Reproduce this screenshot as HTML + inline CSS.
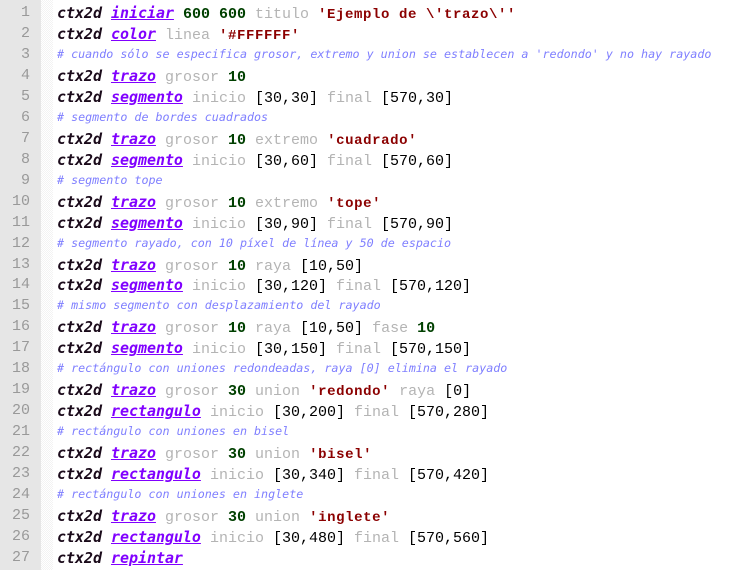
<!DOCTYPE html>
<html><head><meta charset="utf-8"><style>
body{margin:0;width:750px;height:570px;background:#fff;overflow:hidden;position:relative}
.g{position:absolute;left:0;top:0;width:41px;height:570px;background:#e6e6e6}
.d{position:absolute;left:41px;top:0;width:12px;height:570px;background-image:repeating-conic-gradient(#f3f3f3 0 25%,#fff 0 50%);background-size:2px 2px}
.ln{position:absolute;left:0;width:30px;text-align:right;font:15px "Liberation Mono",monospace;color:#999}
.l{position:absolute;left:57px;white-space:pre;font:15px "Liberation Mono",monospace;color:#000}
.c{font-weight:bold;font-style:italic;color:#1a0a1a;font-family:"DejaVu Sans Mono","Liberation Mono",monospace;font-size:14.95px}
.k{font-weight:bold;font-style:italic;color:#8000ff;text-decoration:underline;font-family:"DejaVu Sans Mono","Liberation Mono",monospace;font-size:14.95px}
.p{color:#b4b4b4}
.n{font-weight:bold;color:#004000}
.s{font-weight:bold;color:#8b0000;font-size:14px;letter-spacing:0.6px}
.m{font-style:italic;color:#7f7fff;font-size:11.7px;font-family:"DejaVu Sans Mono","Liberation Mono",monospace}
</style></head><body>
<div class="g"></div><div class="d"></div>
<div id="w"></div>
<script>
var L=[
'<span class="c">ctx2d</span> <span class="k">iniciar</span> <span class="n">600 600</span> <span class="p">titulo</span> <span class="s">\'Ejemplo de \\\'trazo\\\'\'</span>',
'<span class="c">ctx2d</span> <span class="k">color</span> <span class="p">linea</span> <span class="s">\'#FFFFFF\'</span>',
'<span class="m"># cuando sólo se especifica grosor, extremo y union se establecen a \'redondo\' y no hay rayado</span>',
'<span class="c">ctx2d</span> <span class="k">trazo</span> <span class="p">grosor</span> <span class="n">10</span>',
'<span class="c">ctx2d</span> <span class="k">segmento</span> <span class="p">inicio</span> [30,30] <span class="p">final</span> [570,30]',
'<span class="m"># segmento de bordes cuadrados</span>',
'<span class="c">ctx2d</span> <span class="k">trazo</span> <span class="p">grosor</span> <span class="n">10</span> <span class="p">extremo</span> <span class="s">\'cuadrado\'</span>',
'<span class="c">ctx2d</span> <span class="k">segmento</span> <span class="p">inicio</span> [30,60] <span class="p">final</span> [570,60]',
'<span class="m"># segmento tope</span>',
'<span class="c">ctx2d</span> <span class="k">trazo</span> <span class="p">grosor</span> <span class="n">10</span> <span class="p">extremo</span> <span class="s">\'tope\'</span>',
'<span class="c">ctx2d</span> <span class="k">segmento</span> <span class="p">inicio</span> [30,90] <span class="p">final</span> [570,90]',
'<span class="m"># segmento rayado, con 10 píxel de línea y 50 de espacio</span>',
'<span class="c">ctx2d</span> <span class="k">trazo</span> <span class="p">grosor</span> <span class="n">10</span> <span class="p">raya</span> [10,50]',
'<span class="c">ctx2d</span> <span class="k">segmento</span> <span class="p">inicio</span> [30,120] <span class="p">final</span> [570,120]',
'<span class="m"># mismo segmento con desplazamiento del rayado</span>',
'<span class="c">ctx2d</span> <span class="k">trazo</span> <span class="p">grosor</span> <span class="n">10</span> <span class="p">raya</span> [10,50] <span class="p">fase</span> <span class="n">10</span>',
'<span class="c">ctx2d</span> <span class="k">segmento</span> <span class="p">inicio</span> [30,150] <span class="p">final</span> [570,150]',
'<span class="m"># rectángulo con uniones redondeadas, raya [0] elimina el rayado</span>',
'<span class="c">ctx2d</span> <span class="k">trazo</span> <span class="p">grosor</span> <span class="n">30</span> <span class="p">union</span> <span class="s">\'redondo\'</span> <span class="p">raya</span> [0]',
'<span class="c">ctx2d</span> <span class="k">rectangulo</span> <span class="p">inicio</span> [30,200] <span class="p">final</span> [570,280]',
'<span class="m"># rectángulo con uniones en bisel</span>',
'<span class="c">ctx2d</span> <span class="k">trazo</span> <span class="p">grosor</span> <span class="n">30</span> <span class="p">union</span> <span class="s">\'bisel\'</span>',
'<span class="c">ctx2d</span> <span class="k">rectangulo</span> <span class="p">inicio</span> [30,340] <span class="p">final</span> [570,420]',
'<span class="m"># rectángulo con uniones en inglete</span>',
'<span class="c">ctx2d</span> <span class="k">trazo</span> <span class="p">grosor</span> <span class="n">30</span> <span class="p">union</span> <span class="s">\'inglete\'</span>',
'<span class="c">ctx2d</span> <span class="k">rectangulo</span> <span class="p">inicio</span> [30,480] <span class="p">final</span> [570,560]',
'<span class="c">ctx2d</span> <span class="k">repintar</span>'];
var h='';
for(var i=0;i<L.length;i++){var t=4+i*20.96;h+='<div class="ln" style="top:'+t+'px">'+(i+1)+'</div><div class="l" style="top:'+t+'px">'+L[i]+'</div>';}
document.getElementById('w').innerHTML=h;
</script>
</body></html>
